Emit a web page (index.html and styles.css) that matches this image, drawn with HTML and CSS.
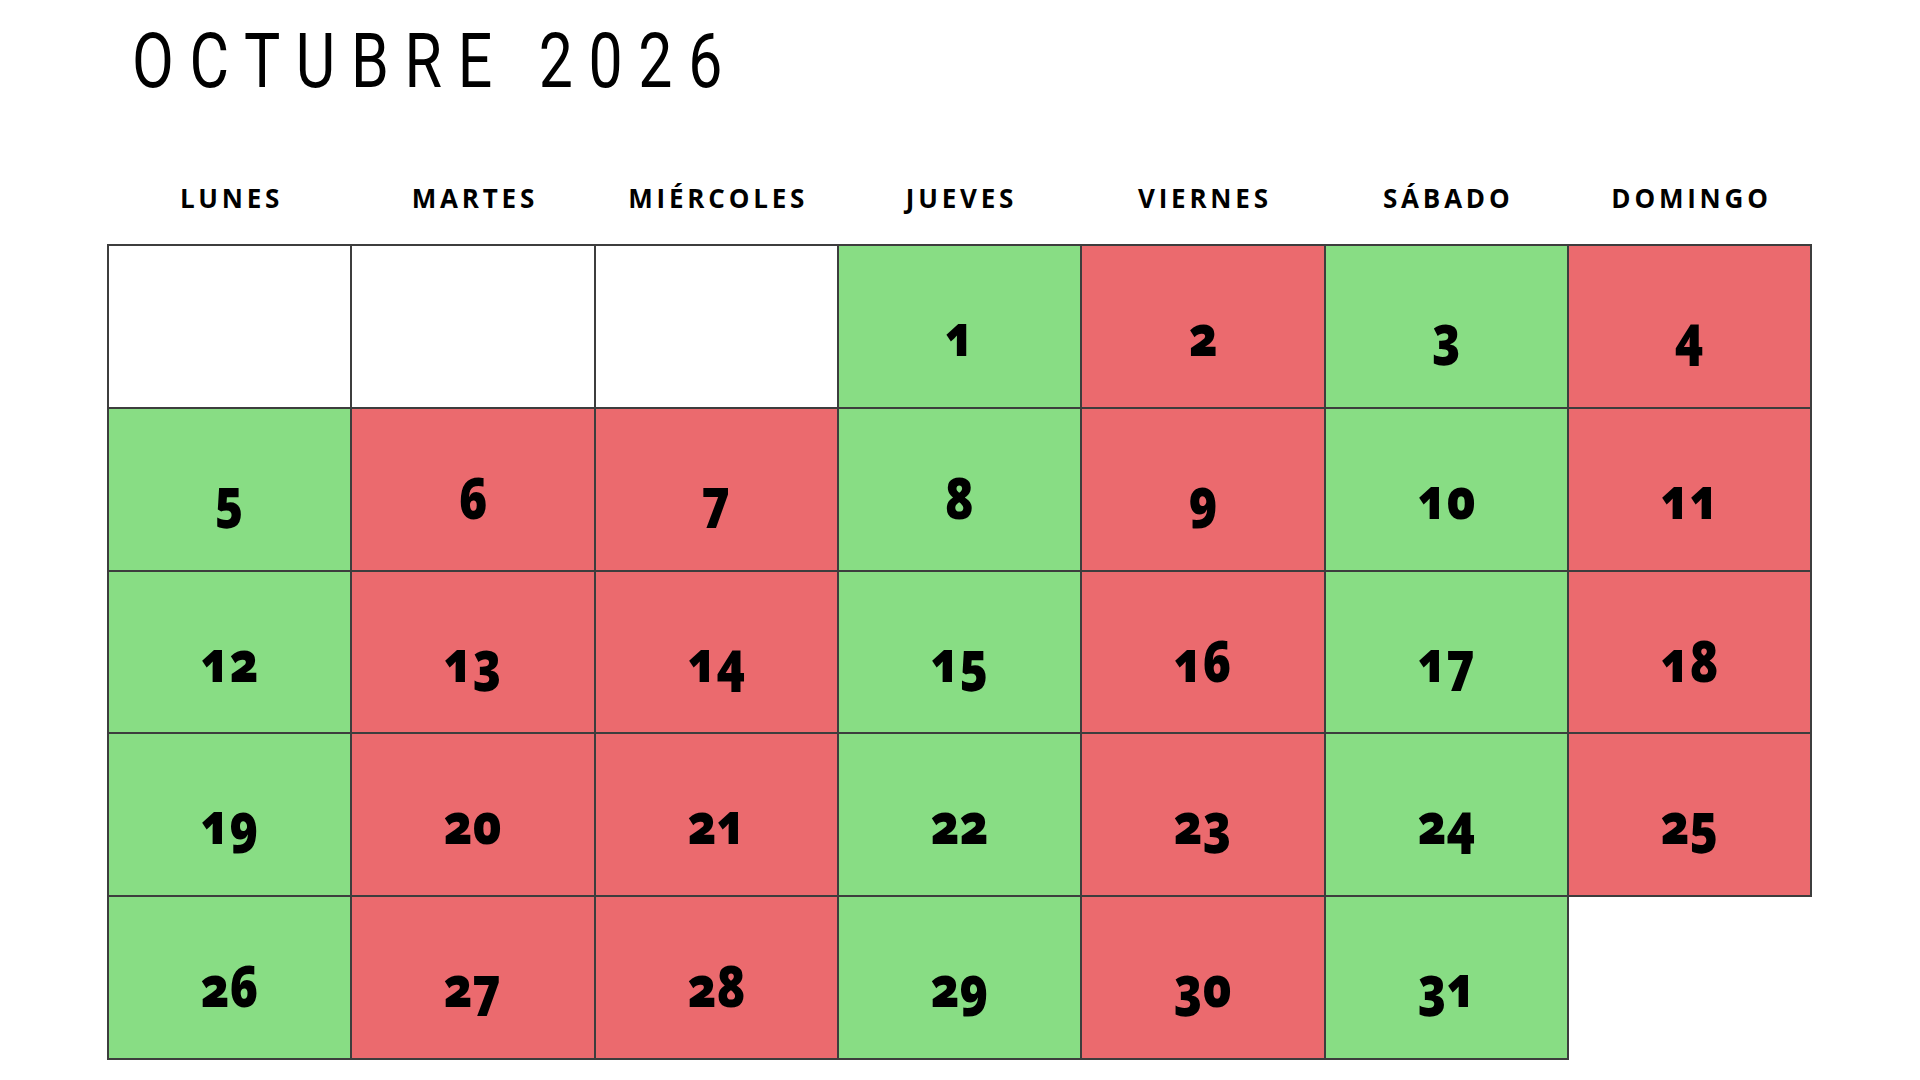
FILE: index.html
```html
<!DOCTYPE html>
<html lang="es">
<head>
<meta charset="utf-8">
<title>Octubre 2026</title>
<link rel="stylesheet" href="styles.css">
</head>
<body>
<main class="page">
  <h1 class="title"><span class="title-text">OCTUBRE 2026</span></h1>
  <div class="weekdays">
    <div class="wd">LUNES</div>
    <div class="wd">MARTES</div>
    <div class="wd">MIÉRCOLES</div>
    <div class="wd">JUEVES</div>
    <div class="wd">VIERNES</div>
    <div class="wd">SÁBADO</div>
    <div class="wd">DOMINGO</div>
  </div>
  <div class="grid">
    <div class="cell blank"></div>
    <div class="cell blank"></div>
    <div class="cell blank"></div>
    <div class="cell g"><span class="num">1</span></div>
    <div class="cell r"><span class="num">2</span></div>
    <div class="cell g"><span class="num">3</span></div>
    <div class="cell r"><span class="num">4</span></div>

    <div class="cell g"><span class="num">5</span></div>
    <div class="cell r"><span class="num">6</span></div>
    <div class="cell r"><span class="num">7</span></div>
    <div class="cell g"><span class="num">8</span></div>
    <div class="cell r"><span class="num">9</span></div>
    <div class="cell g"><span class="num">10</span></div>
    <div class="cell r"><span class="num">11</span></div>

    <div class="cell g"><span class="num">12</span></div>
    <div class="cell r"><span class="num">13</span></div>
    <div class="cell r"><span class="num">14</span></div>
    <div class="cell g"><span class="num">15</span></div>
    <div class="cell r"><span class="num">16</span></div>
    <div class="cell g"><span class="num">17</span></div>
    <div class="cell r"><span class="num">18</span></div>

    <div class="cell g"><span class="num">19</span></div>
    <div class="cell r"><span class="num">20</span></div>
    <div class="cell r"><span class="num">21</span></div>
    <div class="cell g"><span class="num">22</span></div>
    <div class="cell r"><span class="num">23</span></div>
    <div class="cell g"><span class="num">24</span></div>
    <div class="cell r"><span class="num">25</span></div>

    <div class="cell g"><span class="num">26</span></div>
    <div class="cell r"><span class="num">27</span></div>
    <div class="cell r"><span class="num">28</span></div>
    <div class="cell g"><span class="num">29</span></div>
    <div class="cell r"><span class="num">30</span></div>
    <div class="cell g"><span class="num">31</span></div>
  </div>
</main>
</body>
</html>
```

FILE: styles.css
```css
* { box-sizing: border-box; }

html, body {
  margin: 0;
  padding: 0;
  background: #ffffff;
}

.page {
  width: 1920px;
  height: 1080px;
  overflow: hidden;
  color: #000;
}

.title {
  margin: 23px 0 0 132px;
  height: 76px;
  font-family: "Roboto", "Liberation Sans", sans-serif;
  font-weight: 400;
  font-size: 76px;
  line-height: 76px;
  white-space: nowrap;
}

.title-text {
  display: inline-block;
  letter-spacing: 19.6px;
  transform: scaleX(0.8);
  transform-origin: left center;
}

.weekdays {
  margin: 79px 0 0 108px;
  display: grid;
  grid-template-columns: repeat(7, 243.33px);
  height: 40px;
}

.wd {
  text-align: center;
  font-family: "Open Sans", "Liberation Sans", sans-serif;
  font-weight: 700;
  font-size: 26px;
  line-height: 40px;
  letter-spacing: 3.8px;
  padding-left: 3.8px;
}

.grid {
  margin: 27px 0 0 108px;
  display: grid;
  grid-template-columns: repeat(7, 243.33px);
  grid-template-rows: repeat(5, 162.75px);
}

.cell {
  border: 1px solid #3d3d3d;
  box-shadow: 0 0 0 1px #3d3d3d;
  text-align: center;
  font-family: "Open Sans", "Liberation Sans", sans-serif;
  font-weight: 800;
  font-size: 57px;
  line-height: 160px;
  font-variant-numeric: oldstyle-nums;
  padding-top: 8px;
}

.num {
  display: inline-block;
  transform: scaleX(0.84);
}

.blank { background: #ffffff; }
.g { background: #88dd84; }
.r { background: #eb6a6e; }
```
